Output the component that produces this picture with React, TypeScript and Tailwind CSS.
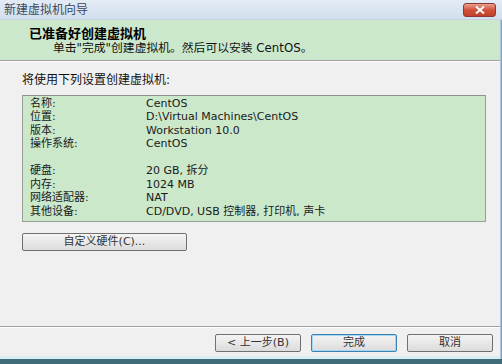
import React from 'react';

const cjk = "font-['DejaVu_Sans','Noto_Sans_CJK_SC',sans-serif]";

const settings: [string, string][] = [
  ['名称:', 'CentOS'],
  ['位置:', 'D:\\Virtual Machines\\CentOS'],
  ['版本:', 'Workstation 10.0'],
  ['操作系统:', 'CentOS'],
  ['', ''],
  ['硬盘:', '20 GB, 拆分'],
  ['内存:', '1024 MB'],
  ['网络适配器:', 'NAT'],
  ['其他设备:', 'CD/DVD, USB 控制器, 打印机, 声卡'],
];

const WinButton = ({ label, primary, w }: { label: string; primary?: boolean; w: string }) => (
  <button
    className={`${w} h-[18px] flex items-center justify-center rounded-[2px] text-[11px] text-[#333] bg-gradient-to-b from-[#f4f4f4] to-[#dcdcdc] ${
      primary ? 'border border-[#3c7fb1] shadow-[inset_0_0_0_1px_#a6d8f5]' : 'border border-[#707070]'
    }`}
  >
    {label}
  </button>
);

const App: React.FC = () => {
  return (
    <div className={`w-[502px] h-[364px] flex flex-col bg-[#f0f0f0] overflow-hidden ${cjk}`}>
      {/* title bar */}
      <div className="h-[20px] flex items-center justify-between bg-gradient-to-b from-[#e3ebf5] to-[#d3dfee] border-b border-[#c4d2e4]">
        <span className="pl-[4px] text-[12px] text-[#3a4a5a]">新建虚拟机向导</span>
        <div className="mr-[6px] w-[33px] h-[14px] rounded-[3px] bg-gradient-to-b from-[#e8a090] via-[#d0503a] to-[#c0402a] border border-[#8a3a30] flex items-center justify-center">
          <svg width="10" height="8" viewBox="0 0 10 8">
            <path d="M1 0.5 L9 7.5 M9 0.5 L1 7.5" stroke="white" strokeWidth="2" />
          </svg>
        </div>
      </div>

      <div className="flex-1 flex">
        <div className="flex-1 flex flex-col">
          {/* header */}
          <div className="h-[41px] bg-[#cce8cc] flex flex-col justify-center border-b border-[#a0a0a0]">
            <div className="pl-[29px] text-[13px] font-bold leading-[15px] text-black">已准备好创建虚拟机</div>
            <div className="pl-[53px] text-[11.8px] leading-[14px] text-[#111]">单击"完成"创建虚拟机。然后可以安装 CentOS。</div>
          </div>
          <div className="h-px bg-white" />

          {/* body */}
          <div className="flex-1 flex flex-col pl-[22px] pr-[14px] pt-[11px]">
            <div className="text-[12px] leading-[14px] text-[#111]">将使用下列设置创建虚拟机:</div>
            <div className="mt-[8px] w-[464px] h-[127px] bg-[#cbe8cb] border border-[#98a098] border-t-[#8a928a] pt-[1px] pl-[7px]">
              {settings.map(([k, v], i) => (
                <div key={i} className="flex h-[13.5px] items-center text-[11px] text-[#1a1a1a]">
                  <span className="w-[116px]">{k}</span>
                  <span>{v}</span>
                </div>
              ))}
            </div>
            <div className="mt-[11px]">
              <WinButton label="自定义硬件(C)..." w="w-[165px]" />
            </div>
            <div className="flex-1" />
          </div>

          {/* footer */}
          <div className="h-px bg-[#a0a0a0]" />
          <div className="h-px bg-white" />
          <div className="h-[28px] flex items-center justify-end gap-[10px] pr-[7px] pt-[2px]">
            <WinButton label="< 上一步(B)" w="w-[86px]" />
            <WinButton label="完成" primary w="w-[86px]" />
            <WinButton label="取消" w="w-[86px]" />
          </div>
          <div className="h-[3px] bg-[#d8eef2]" />
        </div>
        <div className="w-[5px] bg-gradient-to-r from-[#c6d8e8] to-[#6c90b0]" />
      </div>
      <div className="h-[5px] bg-[#3e6b78]" />
    </div>
  );
};

export default App;
